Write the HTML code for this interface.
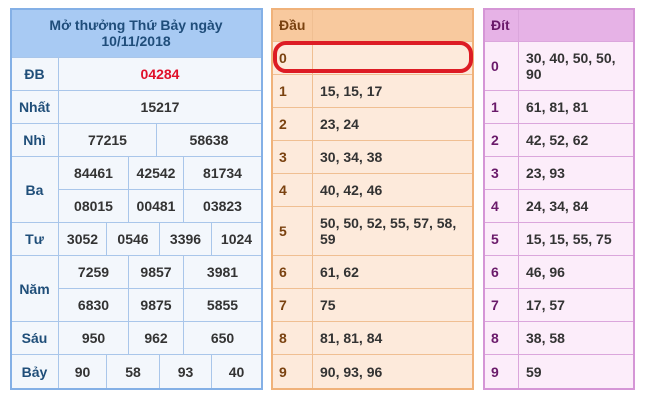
<!DOCTYPE html>
<html><head><meta charset="utf-8"><style>
*{margin:0;padding:0}
body{width:645px;height:401px;background:#fff;position:relative;overflow:hidden;font-family:"Liberation Sans",Arial,sans-serif;font-weight:bold;font-size:14px}
.c{position:absolute;box-sizing:border-box;display:flex;align-items:center;justify-content:center;text-align:center;line-height:16px}
.L .c{background:#f3f7fc;border-right:1px solid #a9c6ea;border-bottom:1px solid #a9c6ea;color:#333}
.L .lb{color:#1f4e79}
.M .c{background:#fdeadb;border-right:1px solid #f0bf92;border-bottom:1px solid #f0bf92;color:#333;justify-content:flex-start;text-align:left;padding-left:7px}
.M .lb{color:#7a4210}
.R .c{background:#fcedfa;border-right:1px solid #dba6dc;border-bottom:1px solid #dba6dc;color:#333;justify-content:flex-start;text-align:left;padding-left:7px}
.R .lb{color:#6a1a6a}
.box{position:absolute;box-sizing:border-box}
</style></head><body>
<div class="L">
<div class="c" style="left:11px;top:8px;width:251px;height:50px;background:#a8caf3;color:#1f4d7a">Mở thưởng Thứ Bảy ngày<br>10/11/2018</div>
<div class="c lb" style="left:11px;top:58px;width:48px;height:33px">ĐB</div>
<div class="c" style="left:59px;top:58px;width:203px;height:33px;color:#e0102a">04284</div>
<div class="c lb" style="left:11px;top:91px;width:48px;height:33px">Nhất</div>
<div class="c" style="left:59px;top:91px;width:203px;height:33px">15217</div>
<div class="c lb" style="left:11px;top:124px;width:48px;height:33px">Nhì</div>
<div class="c" style="left:59px;top:124px;width:98px;height:33px">77215</div>
<div class="c" style="left:157px;top:124px;width:105px;height:33px">58638</div>
<div class="c lb" style="left:11px;top:157px;width:48px;height:66px">Ba</div>
<div class="c" style="left:59px;top:157px;width:70px;height:33px">84461</div>
<div class="c" style="left:129px;top:157px;width:55px;height:33px">42542</div>
<div class="c" style="left:184px;top:157px;width:78px;height:33px">81734</div>
<div class="c" style="left:59px;top:190px;width:70px;height:33px">08015</div>
<div class="c" style="left:129px;top:190px;width:55px;height:33px">00481</div>
<div class="c" style="left:184px;top:190px;width:78px;height:33px">03823</div>
<div class="c lb" style="left:11px;top:223px;width:48px;height:33px">Tư</div>
<div class="c" style="left:59px;top:223px;width:48px;height:33px">3052</div>
<div class="c" style="left:107px;top:223px;width:53px;height:33px">0546</div>
<div class="c" style="left:160px;top:223px;width:52px;height:33px">3396</div>
<div class="c" style="left:212px;top:223px;width:50px;height:33px">1024</div>
<div class="c lb" style="left:11px;top:256px;width:48px;height:66px">Năm</div>
<div class="c" style="left:59px;top:256px;width:70px;height:33px">7259</div>
<div class="c" style="left:129px;top:256px;width:55px;height:33px">9857</div>
<div class="c" style="left:184px;top:256px;width:78px;height:33px">3981</div>
<div class="c" style="left:59px;top:289px;width:70px;height:33px">6830</div>
<div class="c" style="left:129px;top:289px;width:55px;height:33px">9875</div>
<div class="c" style="left:184px;top:289px;width:78px;height:33px">5855</div>
<div class="c lb" style="left:11px;top:322px;width:48px;height:33px">Sáu</div>
<div class="c" style="left:59px;top:322px;width:70px;height:33px">950</div>
<div class="c" style="left:129px;top:322px;width:55px;height:33px">962</div>
<div class="c" style="left:184px;top:322px;width:78px;height:33px">650</div>
<div class="c lb" style="left:11px;top:355px;width:48px;height:34px">Bảy</div>
<div class="c" style="left:59px;top:355px;width:48px;height:34px">90</div>
<div class="c" style="left:107px;top:355px;width:53px;height:34px">58</div>
<div class="c" style="left:160px;top:355px;width:52px;height:34px">93</div>
<div class="c" style="left:212px;top:355px;width:50px;height:34px">40</div>
<div class="box" style="left:10px;top:8px;width:253px;height:382px;border:2px solid #84b0e6"></div>
</div>

<div class="M">
<div class="c lb" style="left:272px;top:8px;width:41px;height:34px;background:#f8c99e">Đầu</div>
<div class="c" style="left:313px;top:8px;width:160px;height:34px;background:#f8c99e"></div>
<div class="c lb" style="left:272px;top:42px;width:41px;height:33px">0</div><div class="c" style="left:313px;top:42px;width:160px;height:33px"></div>
<div class="c lb" style="left:272px;top:75px;width:41px;height:33px">1</div><div class="c" style="left:313px;top:75px;width:160px;height:33px">15, 15, 17</div>
<div class="c lb" style="left:272px;top:108px;width:41px;height:33px">2</div><div class="c" style="left:313px;top:108px;width:160px;height:33px">23, 24</div>
<div class="c lb" style="left:272px;top:141px;width:41px;height:33px">3</div><div class="c" style="left:313px;top:141px;width:160px;height:33px">30, 34, 38</div>
<div class="c lb" style="left:272px;top:174px;width:41px;height:33px">4</div><div class="c" style="left:313px;top:174px;width:160px;height:33px">40, 42, 46</div>
<div class="c lb" style="left:272px;top:207px;width:41px;height:49px">5</div><div class="c" style="left:313px;top:207px;width:160px;height:49px">50, 50, 52, 55, 57, 58,<br>59</div>
<div class="c lb" style="left:272px;top:256px;width:41px;height:33px">6</div><div class="c" style="left:313px;top:256px;width:160px;height:33px">61, 62</div>
<div class="c lb" style="left:272px;top:289px;width:41px;height:33px">7</div><div class="c" style="left:313px;top:289px;width:160px;height:33px">75</div>
<div class="c lb" style="left:272px;top:322px;width:41px;height:33px">8</div><div class="c" style="left:313px;top:322px;width:160px;height:33px">81, 81, 84</div>
<div class="c lb" style="left:272px;top:355px;width:41px;height:34px">9</div><div class="c" style="left:313px;top:355px;width:160px;height:34px">90, 93, 96</div>
<div class="box" style="left:271px;top:8px;width:203px;height:382px;border:2px solid #f0b27a"></div>
</div>

<div class="R">
<div class="c lb" style="left:484px;top:8px;width:35px;height:34px;background:#e6b2e6">Đít</div>
<div class="c" style="left:519px;top:8px;width:115px;height:34px;background:#e6b2e6"></div>
<div class="c lb" style="left:484px;top:42px;width:35px;height:49px">0</div><div class="c" style="left:519px;top:42px;width:115px;height:49px">30, 40, 50, 50,<br>90</div>
<div class="c lb" style="left:484px;top:91px;width:35px;height:33px">1</div><div class="c" style="left:519px;top:91px;width:115px;height:33px">61, 81, 81</div>
<div class="c lb" style="left:484px;top:124px;width:35px;height:33px">2</div><div class="c" style="left:519px;top:124px;width:115px;height:33px">42, 52, 62</div>
<div class="c lb" style="left:484px;top:157px;width:35px;height:33px">3</div><div class="c" style="left:519px;top:157px;width:115px;height:33px">23, 93</div>
<div class="c lb" style="left:484px;top:190px;width:35px;height:33px">4</div><div class="c" style="left:519px;top:190px;width:115px;height:33px">24, 34, 84</div>
<div class="c lb" style="left:484px;top:223px;width:35px;height:33px">5</div><div class="c" style="left:519px;top:223px;width:115px;height:33px">15, 15, 55, 75</div>
<div class="c lb" style="left:484px;top:256px;width:35px;height:33px">6</div><div class="c" style="left:519px;top:256px;width:115px;height:33px">46, 96</div>
<div class="c lb" style="left:484px;top:289px;width:35px;height:33px">7</div><div class="c" style="left:519px;top:289px;width:115px;height:33px">17, 57</div>
<div class="c lb" style="left:484px;top:322px;width:35px;height:33px">8</div><div class="c" style="left:519px;top:322px;width:115px;height:33px">38, 58</div>
<div class="c lb" style="left:484px;top:355px;width:35px;height:34px">9</div><div class="c" style="left:519px;top:355px;width:115px;height:34px">59</div>
<div class="box" style="left:483px;top:8px;width:152px;height:382px;border:2px solid #d596d6"></div>
</div>

<div class="box" style="left:273px;top:41px;width:200px;height:32px;border:4px solid #dd1c24;border-radius:13px"></div>
</body></html>
